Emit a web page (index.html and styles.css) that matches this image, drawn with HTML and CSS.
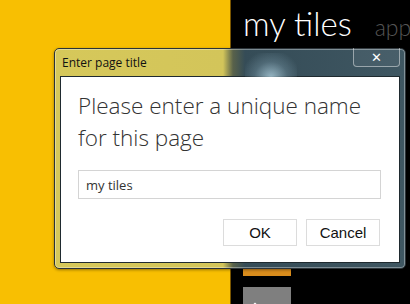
FILE: index.html
```html
<!DOCTYPE html>
<html lang="en">
<head>
  <meta charset="UTF-8" />
  <title>Enter page title</title>
  <link rel="stylesheet" href="styles.css">
</head>
<body>
  <div class="screen">
    <div class="desk"></div>
    <div class="start">
      <div class="start-head">
        <h1>my tiles</h1>
        <span class="next">apps</span>
      </div>
      <div class="tiles">
        <div class="tile orange"></div>
        <div class="tile grey">
          <svg width="10" height="10" viewBox="0 0 10 10"><path d="M5 2.5V10M2 5.5L5 2.5L8 5.5" stroke="#fff" stroke-width="1.5" fill="none"/></svg>
        </div>
      </div>
    </div>

    <div class="dialog">
      <div class="glass-tile"></div>
      <div class="dialog-title">Enter page title</div>
      <button class="close-btn">&#x2715;</button>
      <div class="client">
        <h2>Please enter a unique name for this page</h2>
        <input type="text" class="name-input" value="my tiles" />
        <div class="actions">
          <button class="btn">OK</button>
          <button class="btn">Cancel</button>
        </div>
      </div>
    </div>
  </div>
</body>
</html>
```

FILE: styles.css
```css
* {
  box-sizing: border-box;
  margin: 0;
  padding: 0;
}

body {
  background: #000;
  font-family: 'Open Sans', sans-serif;
}

.screen {
  position: relative;
  display: flex;
  width: 410px;
  height: 304px;
  overflow: hidden;
}

.desk {
  flex-shrink: 0;
  width: 230px;
  background: #f8bf02;
}

.start {
  flex: 1;
  min-width: 0;
  background: #000;
  border-left: 1px solid #7a5500;
  padding-left: 12px;
}

.start-head {
  display: flex;
  align-items: baseline;
  gap: 23px;
  height: 46px;
  white-space: nowrap;
}

.start h1 {
  color: #fff;
  font-family: 'Lato', sans-serif;
  font-weight: 300;
  font-size: 33px;
  line-height: 46px;
}

.next {
  color: #555;
  font-family: 'Lato', sans-serif;
  font-weight: 300;
  font-size: 23px;
}

.tiles {
  display: flex;
  flex-direction: column;
  gap: 11px;
  margin-top: 182px;
}

.tile {
  width: 48px;
  height: 48px;
}

.orange {
  background: #d98c1c;
}

.grey {
  background: #7f7f7f;
  padding: 7px 0 0 7px;
}

/* dialog window */
.dialog {
  position: absolute;
  left: 54px;
  top: 48px;
  width: 352px;
  height: 221px;
  border: 1px solid #2b3338;
  border-radius: 5px;
  background: linear-gradient(to right, #d6c85a 0, #d3c55a 168px, #59624a 178px, #354c57 190px, #3f5762 100%);
  box-shadow: inset 0 0 0 1px rgba(255, 255, 255, 0.35), 0 1px 3px rgba(0, 0, 0, 0.4);
  padding: 27px 5px 5px;
}

.glass-tile {
  position: absolute;
  left: 190px;
  top: 4px;
  width: 52px;
  height: 24px;
  background: radial-gradient(ellipse at 50% 100%, rgba(190, 225, 240, 0.7) 0, rgba(110, 140, 155, 0.45) 45%, rgba(60, 85, 98, 0) 80%);
}

.dialog-title {
  position: absolute;
  left: 7px;
  top: 5px;
  font-size: 12px;
  color: #111;
}

.close-btn {
  position: absolute;
  right: 5px;
  top: -1px;
  width: 47px;
  height: 19px;
  border: 1px solid rgba(255, 255, 255, 0.45);
  border-top: none;
  border-radius: 0 0 4px 4px;
  background: rgba(255, 255, 255, 0.05);
  color: #fff;
  font-family: 'DejaVu Sans', sans-serif;
  font-weight: bold;
  font-size: 13px;
  line-height: 17px;
}

.client {
  height: 100%;
  background: #fff;
  border: 1px solid #1f2a2f;
  padding: 13px 18px 0 17px;
  display: flex;
  flex-direction: column;
}

.client h2 {
  font-family: 'Open Sans', sans-serif;
  font-weight: 300;
  font-size: 22.5px;
  line-height: 32px;
  color: #333;
  width: 300px;
}

.name-input {
  margin-top: 16px;
  height: 29px;
  width: 303px;
  border: 1px solid #d4d4d4;
  padding: 0 7px;
  font-family: 'Open Sans', sans-serif;
  font-size: 13px;
  color: #333;
  outline: none;
}

.actions {
  display: flex;
  justify-content: flex-end;
  gap: 9px;
  margin-top: 20px;
  padding-right: 1px;
}

.btn {
  width: 74px;
  height: 27px;
  background: #fff;
  border: 1px solid #dcdcdc;
  font-family: 'Liberation Sans', sans-serif;
  font-size: 15px;
  color: #111;
}
```
